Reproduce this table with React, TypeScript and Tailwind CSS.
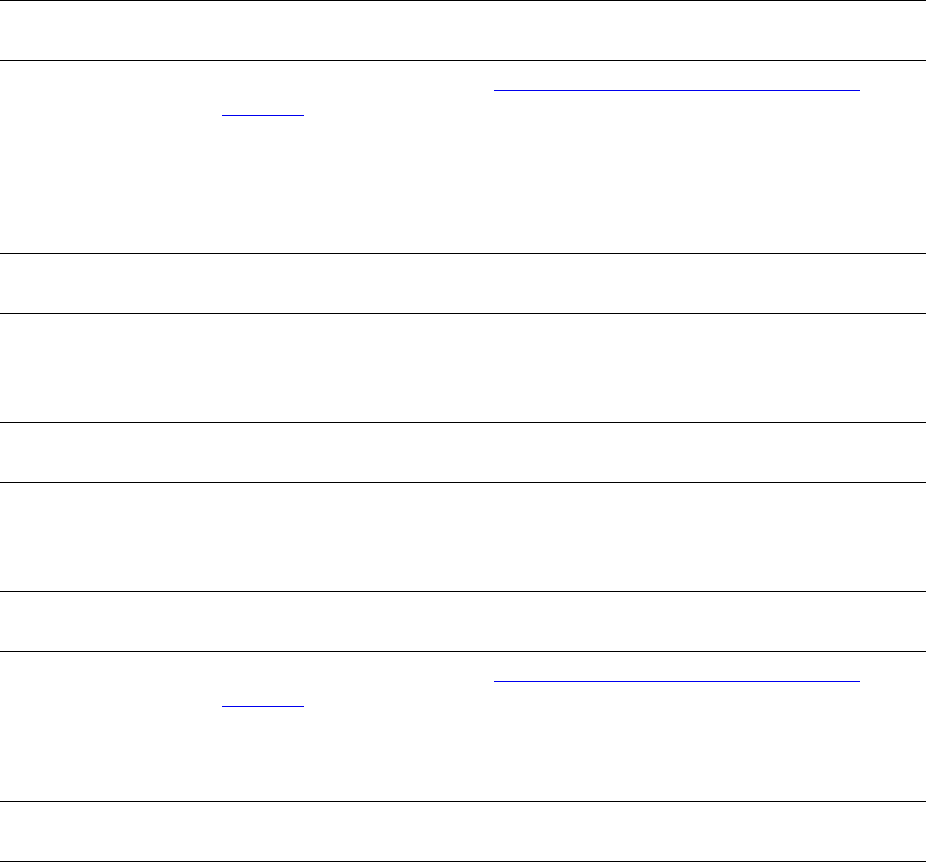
import React from "react";

type Row = { h: string; link?: boolean };

const rows: Row[] = [
  { h: "h-[60px]" },
  { h: "h-[193px]", link: true },
  { h: "h-[60px]" },
  { h: "h-[109px]" },
  { h: "h-[60px]" },
  { h: "h-[109px]" },
  { h: "h-[60px]" },
  { h: "h-[150px]", link: true },
  { h: "h-[61px] border-b" },
];

function LinkBlock() {
  return (
    <div className="pl-[222px]">
      <div className="flex h-[30px]">
        <div className="w-[272px]" />
        <a href="#" className="block w-[366px] h-full border-b border-[#0000ee]" aria-label="link" />
      </div>
      <div className="flex h-[25px]">
        <a href="#" className="block w-[82px] h-full border-b border-[#0000ee]" aria-label="link" />
      </div>
    </div>
  );
}

export default function App() {
  return (
    <div className="w-[926px] h-[862px] bg-white overflow-hidden" style={{ fontFamily: '"Liberation Sans", Arial, sans-serif' }}>
      {rows.map((r, i) => (
        <div key={i} className={`${r.h} border-t border-black`}>
          {r.link ? <LinkBlock /> : null}
        </div>
      ))}
    </div>
  );
}
